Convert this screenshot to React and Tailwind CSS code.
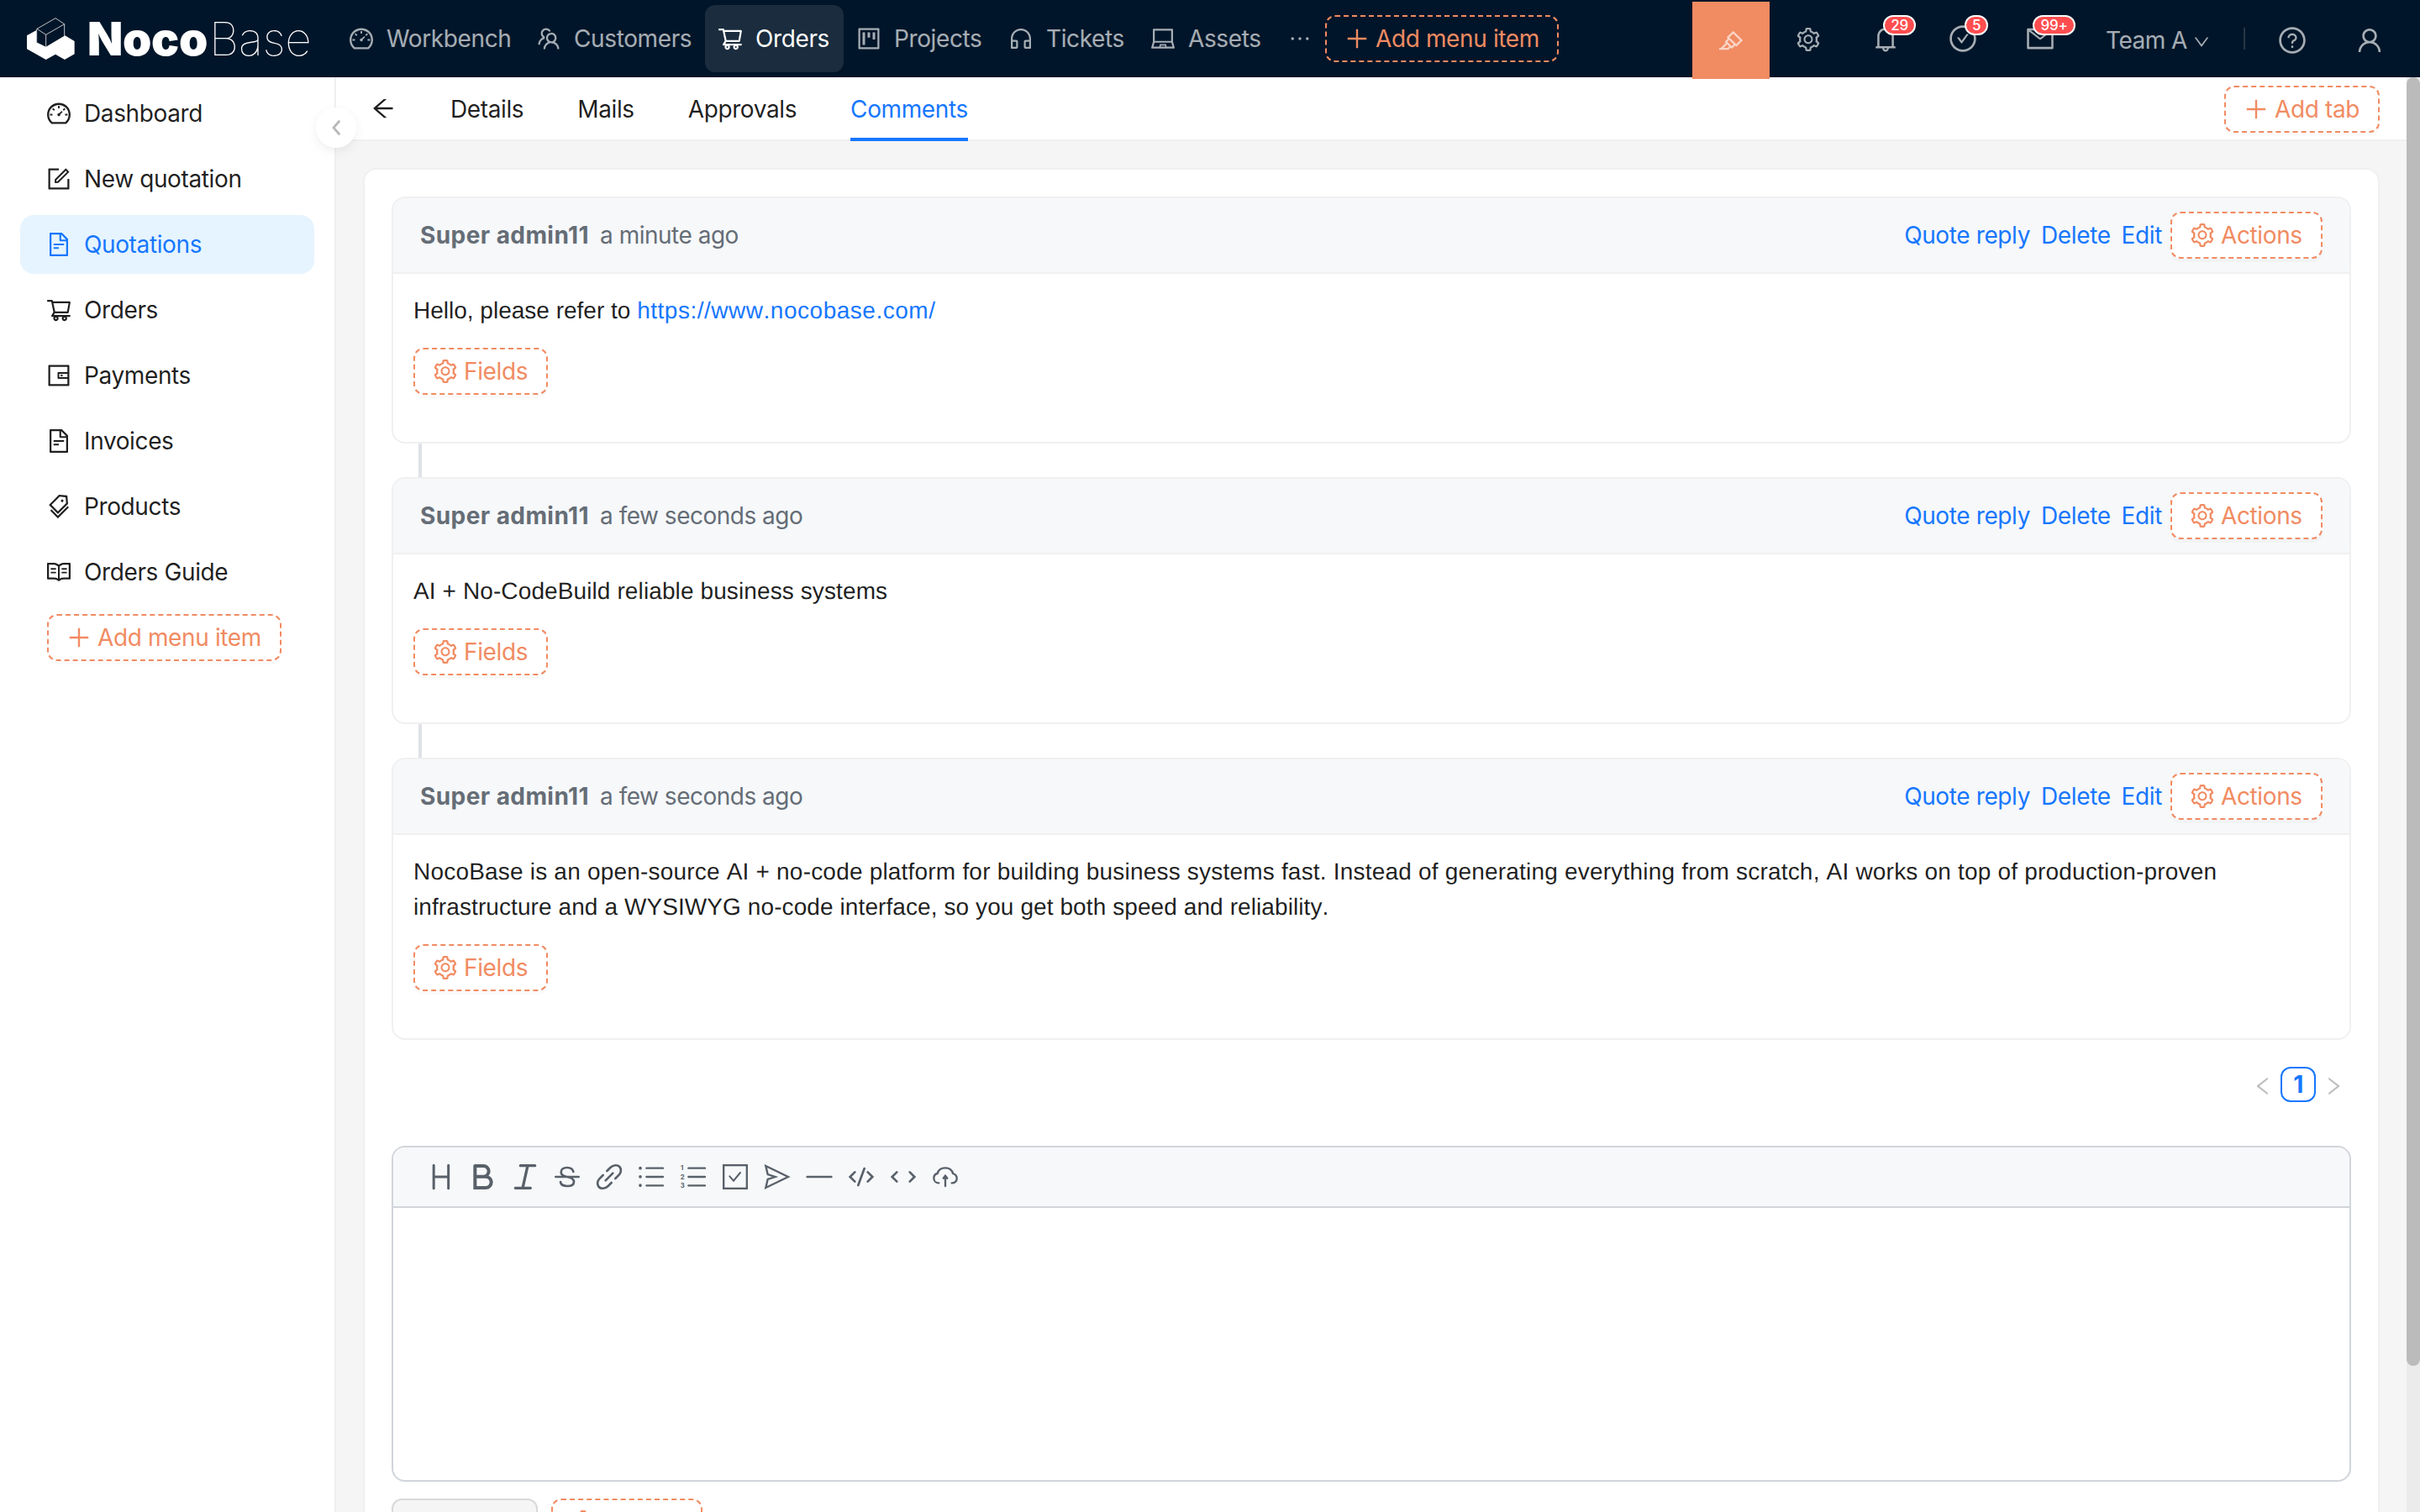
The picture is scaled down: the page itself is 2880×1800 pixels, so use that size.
import {
  AiOutlineArrowLeft,
  AiOutlineBell,
  AiOutlineCheckCircle,
  AiOutlineCustomerService,
  AiOutlineDashboard,
  AiOutlineDown,
  AiOutlineEllipsis,
  AiOutlineFileText,
  AiOutlineForm,
  AiOutlineHighlight,
  AiOutlineLaptop,
  AiOutlineLeft,
  AiOutlineMail,
  AiOutlinePlus,
  AiOutlineProject,
  AiOutlineQuestionCircle,
  AiOutlineRead,
  AiOutlineRight,
  AiOutlineSetting,
  AiOutlineShoppingCart,
  AiOutlineTags,
  AiOutlineTeam,
  AiOutlineUser,
  AiOutlineWallet,
} from "react-icons/ai";

/** Top navigation entries; each one has a fixed slot width */
const navItems = [
  { label: "Workbench", icon: AiOutlineDashboard, width: "w-[223px]" },
  { label: "Customers", icon: AiOutlineTeam, width: "w-[216px]" },
  { label: "Orders", icon: AiOutlineShoppingCart, width: "w-[165px]", active: true },
  { label: "Projects", icon: AiOutlineProject, width: "w-[181px]" },
  { label: "Tickets", icon: AiOutlineCustomerService, width: "w-[169px]" },
  { label: "Assets", icon: AiOutlineLaptop, width: "w-[162px]" },
];

const sideItems = [
  { label: "Dashboard", icon: AiOutlineDashboard },
  { label: "New quotation", icon: AiOutlineForm },
  { label: "Quotations", icon: AiOutlineFileText, active: true },
  { label: "Orders", icon: AiOutlineShoppingCart },
  { label: "Payments", icon: AiOutlineWallet },
  { label: "Invoices", icon: AiOutlineFileText },
  { label: "Products", icon: AiOutlineTags },
  { label: "Orders Guide", icon: AiOutlineRead },
];

const tabs = ["Details", "Mails", "Approvals", "Comments"];

const comments = [
  {
    time: "a minute ago",
    body: (
      <>
        Hello, please refer to <a className="tracking-[0.52px] text-[#1677ff]">https://www.nocobase.com/</a>
      </>
    ),
  },
  {
    time: "a few seconds ago",
    body: <span className="tracking-[0.11px]">AI + No-CodeBuild reliable business systems</span>,
  },
  {
    time: "a few seconds ago",
    body: (
      <>
        <span className="tracking-[0.2px]">
          NocoBase is an open-source AI + no-code platform for building business systems fast. Instead of generating
          everything from scratch, AI works on top of production-proven
        </span>{" "}
        <span className="tracking-[0.09px]">
          infrastructure and a WYSIWYG no-code interface, so you get both speed and reliability.
        </span>
      </>
    ),
  },
];

/** Editor toolbar icons, drawn on a 90x90 grid */
const toolbar = [
  { name: "heading", width: 9, shape: <path d="M18.500 4V86M71 4V86M18.500 45H71" /> },
  { name: "bold", width: 12, shape: <path d="M16 6H46a19 19 0 0 1 0 38H16M46 44H54a20 20 0 0 1 0 40H16V6" /> },
  { name: "italic", width: 10, shape: <path d="M28 5H80M10 85H64M54 5 36 85" /> },
  {
    name: "strike",
    width: 8,
    shape: <path d="M4 45H86M67 27C65 17 57 12 45 12C32 12 23 18 23 28C23 38 32 43 45 45C60 48 69 53 69 63C69 73 59 78 46 78C32 78 22 72 21 63" />,
  },
  {
    name: "link",
    width: 8,
    shape: <path d="M37 24 49 12C59 2 75 1 82 9C89 17 88 30 80 38L67 51M53 66 41 78C31 88 15 89 8 81C1 73 2 60 10 52L23 39M32 58 58 32" />,
  },
  {
    name: "list",
    width: 7,
    shape: (
      <>
        <path d="M28 14H87M28 45H87M28 76H87" />
        <path strokeWidth="11" d="M6 13.500V14M6 44.500V45M6 75.500V76" />
      </>
    ),
  },
  {
    name: "ordered-list",
    width: 7,
    shape: (
      <>
        <path d="M28 14H87M28 45H87M28 76H87" />
        <g className="fill-current stroke-none text-[23px] font-bold">
          <text x="0" y="22">1</text>
          <text x="-1" y="53">2</text>
          <text x="-1" y="84">3</text>
        </g>
      </>
    ),
  },
  {
    name: "check",
    width: 7,
    shape: (
      <>
        <rect x="3.500" y="3.500" width="83" height="83" />
        <path strokeWidth="6" d="M25 43 39 59 63 30" />
      </>
    ),
  },
  { name: "send", width: 7, shape: <path d="M4 6 84 45 4 84 11 54 38 45 11 36Z" /> },
  { name: "divider", width: 8, shape: <path d="M2 45H88" /> },
  { name: "code", width: 8, shape: <path d="M22 28 5 45 22 62M68 28 85 45 68 62M56 15 34 75" /> },
  { name: "inline-code", width: 8, shape: <path d="M22 28 5 45 22 62M68 28 85 45 68 62" /> },
  {
    name: "upload",
    width: 7,
    shape: (
      <>
        <path d="M22 67C12 67 4 60 4 50C4 38 12 34 17 33C20 20 31 13 45 13C59 13 69 20 72 33C79 35 86 40 86 51C86 60 79 67 68 67" />
        <path d="M45 78V44M38 50 45 41 52 50" />
      </>
    ),
  },
];

/** Cube mark next to the word mark */
function LogoMark() {
  return (
    <svg viewBox="36 33 171 150" className="h-[50px] w-[57px]" fill="none">
      <path
        fill="#fff"
        d="M36 97 70 78V121L104 137 172 97 206 117V163L171 183 138 164 104 183 36 145Z"
      />
      <path stroke="#fff" strokeOpacity=".75" strokeWidth="3" d="M72 73 138 35 170 56 104 94ZM104 94V137M170 56V98M71 73V121" />
    </svg>
  );
}

function DesignButton({ icon: Icon = AiOutlineSetting, label, className = "" }) {
  return (
    <button
      className={`flex h-14 shrink-0 items-center gap-[6px] rounded-xl border-2 border-dashed border-[#f18b62] pl-5 whitespace-nowrap text-[#f18b62] ${className}`}
    >
      <Icon size={32} className="shrink-0" />
      {label}
    </button>
  );
}

function HeaderAction({ icon: Icon, size = 36, className = "", badge, badgeClass = "" }) {
  return (
    <div className={`relative flex h-[92px] w-[92px] items-center justify-center ${className}`}>
      <Icon size={size} />
      {badge && (
        <span
          className={`absolute top-[18px] flex h-6 items-center justify-center rounded-full border-2 border-white bg-[#ff4d4f] text-[17px] leading-none font-medium tracking-[-0.3px] text-white ${badgeClass}`}
        >
          {badge}
        </span>
      )}
    </div>
  );
}

function Header() {
  return (
    <header className="flex h-[92px] items-center bg-[#001529] text-white/65">
      <div className="flex w-[400px] items-center pl-8 text-white">
        <LogoMark />
        <div className="ml-[15px] text-[55px] leading-none whitespace-nowrap">
          <span className="font-black tracking-[-0.3px]">Noco</span>
          <span className="ml-[2px] font-thin tracking-[-0.3px]">Base</span>
        </div>
      </div>

      {navItems.map(({ label, icon: Icon, width, active }) => (
        <div
          key={label}
          className={`flex h-20 items-center gap-[14px] rounded-xl pl-[14px] ${width} ${active ? "bg-[#1a2c3e] text-white" : ""}`}
        >
          <Icon size={32} className="shrink-0" />
          <span>{label}</span>
        </div>
      ))}
      <div className="flex w-[61px] justify-center">
        <AiOutlineEllipsis size={32} />
      </div>
      <DesignButton icon={AiOutlinePlus} label="Add menu item" className="w-[278px]" />

      <div className="ml-auto flex items-center pr-[14px]">
        <HeaderAction icon={AiOutlineHighlight} size={32} className="top-[2px] bg-[#f18b62]" />
        <HeaderAction icon={AiOutlineSetting} size={32} className="pt-[2px]" />
        <HeaderAction icon={AiOutlineBell} badge="29" badgeClass="left-[43px] w-[39px]" />
        <HeaderAction icon={AiOutlineCheckCircle} badge="5" badgeClass="left-12 w-7" />
        <HeaderAction icon={AiOutlineMail} badge="99+" badgeClass="left-[37px] w-[51px]" />
        <div className="flex w-[196px] items-center gap-[6px] pt-1 pl-8">
          <span className="tracking-[-0.5px]">Team A</span>
          <AiOutlineDown size={22} className="mt-1" />
        </div>
        <div className="h-[26px] w-[2px] bg-white/15" />
        <div className="flex pt-1 pl-[10px]">
          <HeaderAction icon={AiOutlineQuestionCircle} />
          <HeaderAction icon={AiOutlineUser} />
        </div>
      </div>
    </header>
  );
}

function Sidebar() {
  return (
    <aside className="relative w-[400px] shrink-0 border-r-2 border-[#f0f0f0] bg-white px-6 pt-2">
      <nav className="flex flex-col gap-2">
        {sideItems.map(({ label, icon: Icon, active }) => (
          <a
            key={label}
            className={`flex h-[70px] items-center gap-[14px] rounded-2xl pl-[30px] ${active ? "bg-[#e6f4ff] text-[#1677ff]" : ""}`}
          >
            <Icon size={32} className="shrink-0" />
            <span>{label}</span>
          </a>
        ))}
      </nav>
      <DesignButton
        icon={AiOutlinePlus}
        label="Add menu item"
        className="mt-[15px] ml-8 w-[279px] bg-white shadow-[0_4px_0_rgba(0,0,0,0.02)]"
      />
      {/* Collapse handle sitting on the sidebar edge */}
      <div className="absolute top-9 -right-[26px] z-10 flex h-12 w-12 items-center justify-center rounded-full bg-white shadow-[0_4px_16px_-4px_rgba(0,0,0,0.12)]">
        <svg viewBox="0 0 12 20" className="h-5 w-3" fill="none" stroke="#b8b8b8" strokeWidth="2.800" strokeLinecap="round">
          <path d="M9.500 2.500 3 10l6.500 7.500" />
        </svg>
      </div>
    </aside>
  );
}

function CommentCard({ time, body }) {
  return (
    <article className="overflow-hidden rounded-2xl border-2 border-[#f0f0f0] bg-white">
      <div className="flex h-[90px] items-center border-b-2 border-[#f0f0f0] bg-[#f6f8fa] px-8 text-[#656d76]">
        <span className="font-bold tracking-[0.42px]">Super admin11</span>
        <span className="ml-[13px] tracking-[-0.5px]">{time}</span>
        <div className="ml-auto flex items-center gap-[13px] text-[#1677ff]">
          <a>Quote reply</a>
          <a>Delete</a>
          <a>Edit</a>
          <DesignButton label="Actions" className="-ml-[3px] w-[181px] bg-white shadow-[0_4px_0_rgba(0,0,0,0.02)]" />
        </div>
      </div>
      <div className="px-6 pt-[23px] pb-14">
        <p className="font-['Liberation_Sans',Arial,sans-serif] leading-[42px] tracking-normal [font-kerning:none] [text-rendering:geometricPrecision]">
          {body}
        </p>
        <DesignButton label="Fields" className="mt-[23px] w-[160px] bg-white shadow-[0_4px_0_rgba(0,0,0,0.02)]" />
      </div>
    </article>
  );
}

function Pagination() {
  return (
    <div className="mt-8 flex justify-end text-[#bfbfbf]">
      <span className="flex h-[42px] w-[42px] items-center justify-center pt-[3px]">
        <AiOutlineLeft size={28} />
      </span>
      <span className="flex h-[42px] w-[42px] items-center justify-center rounded-xl border-2 border-[#1677ff] font-bold text-[#1677ff]">
        1
      </span>
      <span className="flex h-[42px] w-[42px] items-center justify-center pt-[3px]">
        <AiOutlineRight size={28} />
      </span>
    </div>
  );
}

function Editor() {
  return (
    <div className="mt-[52px] h-[400px] overflow-hidden rounded-2xl border-2 border-[#d1d5da] bg-white">
      <div className="flex h-[72px] items-center gap-5 border-b-2 border-[#d1d5da] bg-[#f6f8fa] pl-[42px] text-[#586069]">
        {toolbar.map(({ name, width, shape }) => (
          <svg
            key={name}
            viewBox="0 0 90 90"
            className="h-[30px] w-[30px] shrink-0 overflow-visible"
            fill="none"
            stroke="currentColor"
            strokeWidth={width}
            strokeLinecap="round"
          >
            {shape}
          </svg>
        ))}
      </div>
    </div>
  );
}

export default function App() {
  return (
    <div className="flex h-[1800px] w-[2880px] flex-col overflow-hidden bg-[#f5f5f5] font-[Inter,sans-serif] text-[28px] leading-[42px] tracking-[-0.38px] text-black/88">
      <Header />
      <div className="flex min-h-0 flex-1">
        <Sidebar />

        <main className="min-w-0 flex-1">
          {/* Page tabs */}
          <div className="flex h-[76px] items-center border-b-2 border-[#f0f0f0] bg-white pr-8 pl-10">
            <AiOutlineArrowLeft size={32} />
            <div className="ml-[64px] flex gap-16 self-stretch">
              {tabs.map((tab) => (
                <a
                  key={tab}
                  className={`-mb-[2px] flex items-center border-b-4 pt-[4px] ${tab === "Comments" ? "border-[#1677ff] text-[#1677ff]" : "border-transparent"}`}
                >
                  {tab}
                </a>
              ))}
            </div>
            <DesignButton
              icon={AiOutlinePlus}
              label="Add tab"
              className="mt-[2px] ml-auto w-[185px] bg-white shadow-[0_4px_0_rgba(0,0,0,0.02)]"
            />
          </div>

          <section className="m-8 rounded-2xl border-2 border-[#f0f0f0] bg-white p-8 pb-0">
            {comments.map((comment, i) => (
              <div key={i}>
                {i > 0 && <div className="ml-8 h-10 w-1 bg-[#dfe2e6]" />}
                <CommentCard {...comment} />
              </div>
            ))}
            <Pagination />
            <Editor />
            <div className="mt-5 flex gap-4">
              <button className="h-14 w-[174px] rounded-xl border-2 border-[#d9d9d9] bg-[#f5f5f5]" />
              <DesignButton className="w-[180px] bg-white" />
            </div>
          </section>
        </main>

        {/* Scrollbar */}
        <div className="w-4 shrink-0 bg-[#ebebeb]">
          <div className="h-[1534px] rounded-full bg-[#bbbbbb]" />
        </div>
      </div>
    </div>
  );
}
